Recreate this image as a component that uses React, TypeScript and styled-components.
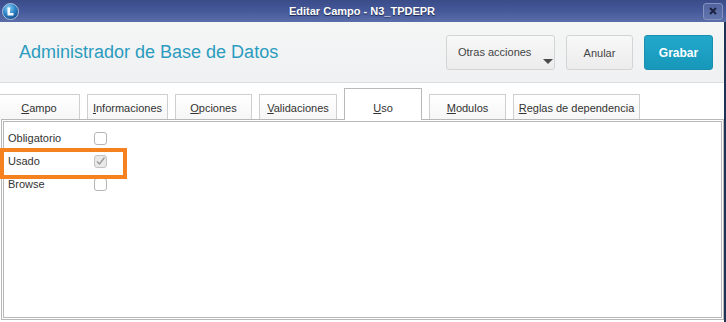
import React from "react";
import styled, { createGlobalStyle } from "styled-components";

const Global = createGlobalStyle`
  html, body { margin: 0; padding: 0; background: #ffffff; overflow: hidden; }
  body { font-family: "Liberation Sans", Arial, sans-serif; }
  * { box-sizing: border-box; }
`;

const Window = styled.div`
  width: 726px;
  height: 322px;
  display: flex;
  flex-direction: column;
  background: #ffffff;
`;

const TitleBar = styled.div`
  height: 22px;
  flex: none;
  display: flex;
  align-items: center;
  padding: 0 3px 0 2px;
  background: linear-gradient(to bottom, #3a4c88 0%, #45589a 50%, #5a6ea9 100%);
  color: #ffffff;
`;

const TitleText = styled.div`
  flex: 1;
  text-align: center;
  font-size: 11px;
  font-weight: bold;
  text-shadow: 0 1px 1px #1a2448;
  padding-left: 2px;
`;

const CloseButton = styled.div`
  width: 20px;
  height: 17px;
  border: 1px solid #8392c0;
  border-radius: 3px;
  background: linear-gradient(to bottom, #52649f, #6274ad);
  display: flex;
  align-items: center;
  justify-content: center;
`;

const Body = styled.div`
  flex: 1;
  display: flex;
  flex-direction: column;
  border-right: 2px solid #1f3353;
  min-height: 0;
`;

const Header = styled.div`
  height: 61px;
  flex: none;
  display: flex;
  align-items: center;
  justify-content: space-between;
  padding: 0 11px 0 19px;
  background: linear-gradient(to bottom, #f4f5f5, #f0f1f2);
  border-bottom: 1px solid #dcdddf;
`;

const AppTitle = styled.h1`
  margin: 0;
  font-size: 18px;
  font-weight: normal;
  color: #2b9cc0;
  padding-top: 1px;
`;

const Actions = styled.div`
  display: flex;
  gap: 11px;
  align-items: center;
  padding-top: 1px;
`;

const Button = styled.button<{ $primary?: boolean; $w: number }>`
  position: relative;
  width: ${(p) => p.$w}px;
  height: 35px;
  border-radius: 3px;
  font-family: "Liberation Sans", Arial, sans-serif;
  font-size: ${(p) => (p.$primary ? 12 : 11)}px;
  font-weight: ${(p) => (p.$primary ? "bold" : "normal")};
  color: ${(p) => (p.$primary ? "#ffffff" : "#444444")};
  border: 1px solid ${(p) => (p.$primary ? "#1a8fb0" : "#d4d4d4")};
  background: ${(p) =>
    p.$primary
      ? "linear-gradient(to bottom, #22a7ca, #1798bb)"
      : "linear-gradient(to bottom, #f8f8f8, #ececec)"};
  padding: 0;
  cursor: pointer;
`;

const MenuLabel = styled.span`
  display: block;
  text-align: left;
  padding-left: 11px;
  margin-top: -1px;
`;

const Caret = styled.span`
  position: absolute;
  right: 1px;
  bottom: 5px;
  width: 0;
  height: 0;
  border-left: 5px solid transparent;
  border-right: 5px solid transparent;
  border-top: 5px solid #4a4a4a;
`;

const TabRow = styled.div`
  display: flex;
  align-items: flex-end;
  gap: 7px;
  padding-top: 4px;
  height: 36px;
  flex: none;
  margin-left: -2px;
  position: relative;
  z-index: 1;
`;

const Tab = styled.div<{ $active?: boolean; $w: number }>`
  width: ${(p) => p.$w}px;
  height: ${(p) => (p.$active ? 32 : 25)}px;
  border: 1px solid ${(p) => (p.$active ? "#b9b9b9" : "#cfcfcf")};
  border-bottom: none;
  background: ${(p) =>
    p.$active ? "#ffffff" : "linear-gradient(to bottom, #ffffff, #f6f6f6)"};
  display: flex;
  align-items: flex-end;
  justify-content: center;
  padding-bottom: ${(p) => (p.$active ? 6 : 5)}px;
  font-size: 11px;
  white-space: nowrap;
  color: #333333;
  margin-bottom: ${(p) => (p.$active ? -1 : 0)}px;
`;

const Key = styled.span`
  text-decoration: underline;
`;

const Panel = styled.div`
  flex: 1;
  margin: 0 0 2px 1px;
  border: 3px double #b8b8b8;
  position: relative;
  padding: 5px 0 0 4px;
  display: grid;
  grid-template-columns: 86px 14px;
  grid-auto-rows: 22px;
  row-gap: 1px;
  align-content: start;
  align-items: center;
`;

const Label = styled.span`
  font-size: 11px;
  color: #333333;
`;

const Check = styled.span<{ $checked?: boolean }>`
  width: 13px;
  height: 13px;
  border: 1px solid ${(p) => (p.$checked ? "#c2c2c2" : "#b5b5b5")};
  border-radius: 3px;
  background: ${(p) => (p.$checked ? "#e9e9e9" : "#ffffff")};
  display: flex;
  align-items: center;
  justify-content: center;
`;

const Highlight = styled.div`
  position: absolute;
  left: -4px;
  top: 26px;
  width: 127px;
  height: 31px;
  border: 4px solid #f5821f;
  pointer-events: none;
`;

function AppIcon() {
  return (
    <svg width="17" height="17" viewBox="0 0 17 17">
      <defs>
        <radialGradient id="g" cx="40%" cy="30%" r="70%">
          <stop offset="0%" stopColor="#8fd0f5" />
          <stop offset="55%" stopColor="#2d86c9" />
          <stop offset="100%" stopColor="#1a4f8f" />
        </radialGradient>
      </defs>
      <circle cx="8.5" cy="8.5" r="8" fill="url(#g)" stroke="#c9d6ea" strokeWidth="0.8" />
      <path d="M5.5 4.5 H8 V10 H11.5 V12.5 H5.5 Z" fill="#ffffff" opacity="0.95" />
    </svg>
  );
}

function CloseIcon() {
  return (
    <svg width="8" height="8" viewBox="0 0 8 8">
      <path d="M1 1 L7 7 M7 1 L1 7" stroke="#1c2340" strokeWidth="2" />
    </svg>
  );
}

function CheckMark() {
  return (
    <svg width="11" height="11" viewBox="0 0 11 11">
      <path d="M2 5.5 L4.5 8 L9.5 1.5" fill="none" stroke="#9a9a9a" strokeWidth="1.4" />
    </svg>
  );
}

const tabs: { first: string; rest: string; w: number; active?: boolean }[] = [
  { first: "C", rest: "ampo", w: 82 },
  { first: "I", rest: "nformaciones", w: 81 },
  { first: "O", rest: "pciones", w: 77 },
  { first: "V", rest: "alidaciones", w: 78 },
  { first: "U", rest: "so", w: 78, active: true },
  { first: "M", rest: "odulos", w: 77 },
  { first: "R", rest: "eglas de dependencia", w: 127 },
];

const fields = [
  { label: "Obligatorio", checked: false },
  { label: "Usado", checked: true },
  { label: "Browse", checked: false },
];

export default function App() {
  return (
    <>
      <Global />
      <Window>
        <TitleBar>
          <AppIcon />
          <TitleText>Editar Campo - N3_TPDEPR</TitleText>
          <CloseButton>
            <CloseIcon />
          </CloseButton>
        </TitleBar>
        <Body>
          <Header>
            <AppTitle>Administrador de Base de Datos</AppTitle>
            <Actions>
              <Button $w={109}>
                <MenuLabel>Otras acciones</MenuLabel>
                <Caret />
              </Button>
              <Button $w={67}>Anular</Button>
              <Button $w={69} $primary>
                Grabar
              </Button>
            </Actions>
          </Header>
          <TabRow>
            {tabs.map((t) => (
              <Tab key={t.rest} $w={t.w} $active={t.active}>
                <span>
                  <Key>{t.first}</Key>
                  {t.rest}
                </span>
              </Tab>
            ))}
          </TabRow>
          <Panel>
            {fields.map((f) => (
              <React.Fragment key={f.label}>
                <Label>{f.label}</Label>
                <Check $checked={f.checked}>{f.checked && <CheckMark />}</Check>
              </React.Fragment>
            ))}
            <Highlight />
          </Panel>
        </Body>
      </Window>
    </>
  );
}
